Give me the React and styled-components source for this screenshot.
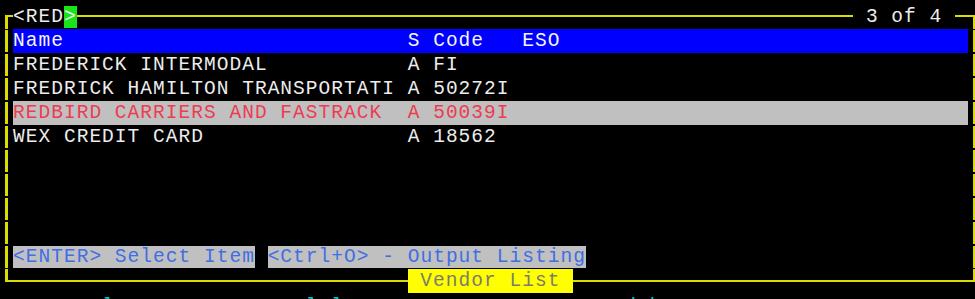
import React from "react";
import styled, { createGlobalStyle, css } from "styled-components";

const GlobalStyle = createGlobalStyle`
  html, body {
    margin: 0;
    background: #000;
  }
  body {
    height: 299px;
    overflow: hidden;
    padding-top: 5px;
    box-sizing: border-box;
  }
`;

const YELLOW = "#dcdc00";
const CELL = 12.73; // one terminal column, px

const Screen = styled.div`
  width: ${75 * CELL + 26}px;
  font-family: "Liberation Mono", "DejaVu Sans Mono", monospace;
  font-size: 19.5px;
  letter-spacing: ${CELL - 19.5 * 0.6}px;
  line-height: 24px;
  color: #ececec;
  white-space: pre;
`;

const Row = styled.div`
  display: flex;
  height: 24px;
`;

const Side = styled.div`
  width: 13px;
  flex: none;
  display: flex;
  justify-content: center;
  &::before {
    content: "";
    width: 3px;
    margin: 1px 0;
    background: ${YELLOW};
  }
`;

/* box corners: a line from the cell centre to one side and up or down */
const Corner = styled.div`
  width: 13px;
  flex: none;
  display: flex;
  justify-content: ${p => (p.$right ? "flex-start" : "flex-end")};
  align-items: ${p => (p.$bottom ? "flex-start" : "flex-end")};
  &::before {
    content: "";
    width: 8px;
    height: ${p => (p.$bottom ? "13px" : "14px")};
    border-style: solid;
    border-color: ${YELLOW};
    border-width: 0;
    ${p => (p.$bottom ? "border-bottom-width: 2px;" : "border-top-width: 2px;")}
    ${p => (p.$right ? "border-right-width: 3px;" : "border-left-width: 3px;")}
    box-sizing: border-box;
  }
`;

const Rule = styled.div`
  height: 2px;
  background: ${YELLOW};
  margin-top: ${p => (p.$bottom ? "11px" : "10px")};
  ${p =>
    p.$cols
      ? css`
          width: ${p.$cols * CELL}px;
          flex: none;
        `
      : css`
          flex: 1;
        `}
`;

const Label = styled.span`
  flex: none;
`;

const Cursor = styled.span`
  background: #18e418;
  color: #f0f0f0;
`;

const Line = styled.div`
  flex: 1;
  ${p =>
    p.$tone === "header" &&
    css`
      background: #0000ff;
      color: #f4f4f4;
    `}
  ${p =>
    p.$tone === "selected" &&
    css`
      background: #c0c0c0;
      color: #ec3c52;
    `}
`;

const Key = styled.span`
  background: #c0c0c0;
  color: #3f6ee6;
`;

const Tab = styled.span`
  flex: none;
  background: #ffff00;
  color: #7c7c6c;
`;

const Status = styled.div`
  height: 24px;
  padding-left: 13px;
  padding-top: 2px;
`;

const Ink = styled.span`
  color: ${p => (p.$yellow ? "#ffff00" : "#00c8c8")};
`;

const vendors = [
  { name: "FREDERICK INTERMODAL", s: "A", code: "FI" },
  { name: "FREDRICK HAMILTON TRANSPORTATI", s: "A", code: "50272I" },
  { name: "REDBIRD CARRIERS AND FASTRACK", s: "A", code: "50039I", selected: true },
  { name: "WEX CREDIT CARD", s: "A", code: "18562" }
];

const pad = (text, n) => text + " ".repeat(Math.max(0, n - text.length));

const VendorRow = ({ name, s, code, selected }) => (
  <Row>
    <Side />
    <Line $tone={selected ? "selected" : undefined}>
      {pad(name, 31) + s + " " + code}
    </Line>
    <Side />
  </Row>
);

const EmptyRow = () => (
  <Row>
    <Side />
    <Line />
    <Side />
  </Row>
);

export default function App() {
  return (
    <>
      <GlobalStyle />
      <Screen>
        <Row>
          <Corner />
          <Label>
            {"<RED"}
            <Cursor>{">"}</Cursor>
          </Label>
          <Rule />
          <Label>{" 3 of 4 "}</Label>
          <Rule $cols={1} />
          <Corner $right />
        </Row>

        <Row>
          <Side />
          <Line $tone="header">{pad("Name", 31) + "S Code   ESO"}</Line>
          <Side />
        </Row>

        {vendors.map(v => (
          <VendorRow key={v.name} {...v} />
        ))}

        <EmptyRow />
        <EmptyRow />
        <EmptyRow />
        <EmptyRow />

        <Row>
          <Side />
          <Line>
            <Key>{"<ENTER> Select Item"}</Key>
            {" "}
            <Key>{"<Ctrl+O> - Output Listing"}</Key>
          </Line>
          <Side />
        </Row>

        <Row>
          <Corner $bottom />
          <Rule $bottom />
          <Tab>{" Vendor List "}</Tab>
          <Rule $bottom />
          <Corner $bottom $right />
        </Row>

        <Status>
          {"       "}
          <Ink>l</Ink>
          {"         "}
          <Ink $yellow>501</Ink>
          {"   "}
          <Ink>l</Ink>
          {" "}
          <Ink>l</Ink>
          {"     "}
          <Ink>1000</Ink>
          {"     "}
          <Ink>S</Ink>
          {"       "}
          <Ink>dSh</Ink>
        </Status>
      </Screen>
    </>
  );
}
